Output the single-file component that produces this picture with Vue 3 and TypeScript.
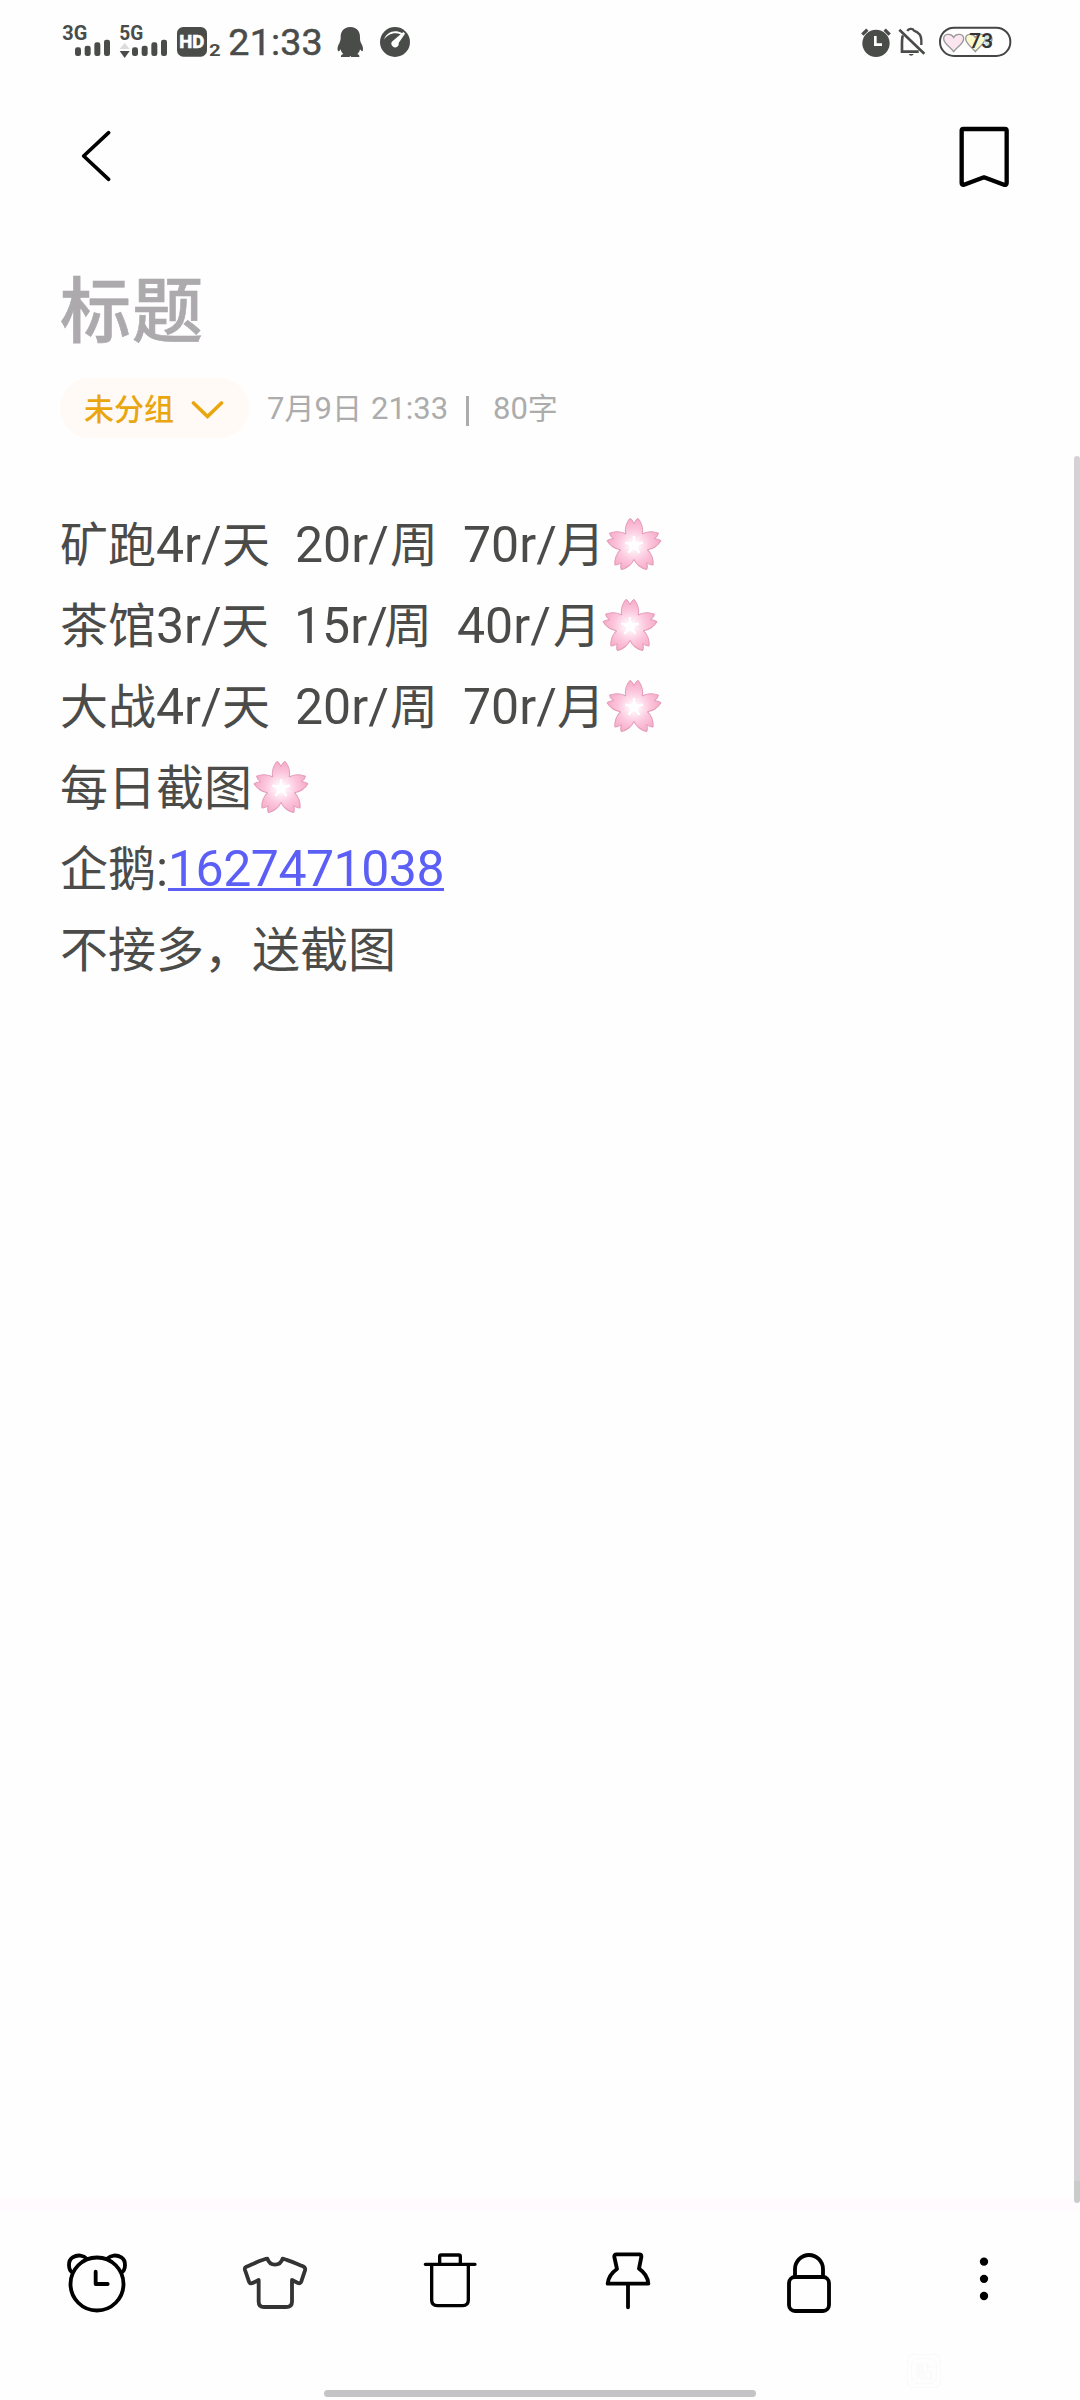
<script setup lang="ts">
interface Segment {
  text: string
  width: number
  kind: 'han' | 'latin' | 'link' | 'gap' | 'flower'
}

const han = (text: string): Segment => ({ text, width: text.length * 48, kind: 'han' })
const latin = (text: string, width: number): Segment => ({ text, width, kind: 'latin' })
const gap = (): Segment => ({ text: '\u00a0\u00a0', width: 25, kind: 'gap' })
const flower: Segment = { text: '', width: 58, kind: 'flower' }

const lines: Segment[][] = [
  [han('矿跑'), latin('4r/', 66), han('天'), gap(), latin('20r/', 95), han('周'), gap(), latin('70r/', 94), han('月'), flower],
  [han('茶馆'), latin('3r/', 65), han('天'), gap(), latin('15r/', 90), han('周'), gap(), latin('40r/', 96), han('月'), flower],
  [han('大战'), latin('4r/', 66), han('天'), gap(), latin('20r/', 95), han('周'), gap(), latin('70r/', 94), han('月'), flower],
  [han('每日截图'), flower],
  [han('企鹅'), latin(':', 12), { text: '1627471038', width: 276, kind: 'link' }],
  [han('不接多，送截图')],
]

const petals = [0, 72, 144, 216, 288]
</script>

<template>
  <div class="screen">
    <header class="status">
      <svg class="status-left" viewBox="0 0 1140 210">
        <g fill="#4a4c4a">
          <text x="37" y="89" font-size="62" font-weight="700" textLength="75" lengthAdjust="spacingAndGlyphs">3G</text>
          <rect x="75" y="112" width="18" height="26" rx="7" />
          <rect x="104" y="107" width="18" height="31" rx="7" />
          <rect x="133" y="97" width="18" height="41" rx="7" />
          <rect x="162" y="89" width="18" height="49" rx="7" />
          <text x="208" y="89" font-size="62" font-weight="700" textLength="72" lengthAdjust="spacingAndGlyphs">5G</text>
          <path d="M209 117L224 99L239 117Z" fill="#dcdcdc" />
          <path d="M209 123H239L224 144Z" />
          <rect x="246" y="112" width="18" height="26" rx="7" />
          <rect x="275" y="107" width="18" height="31" rx="7" />
          <rect x="304" y="97" width="18" height="41" rx="7" />
          <rect x="333" y="89" width="18" height="49" rx="7" />
          <rect x="381" y="51" width="90" height="89" rx="19" />
          <text x="388" y="115" font-size="56" font-weight="700" fill="#fff" stroke="#fff" stroke-width="2" textLength="75" lengthAdjust="spacingAndGlyphs">HD</text>
          <text x="477" y="137" font-size="50" font-weight="700" textLength="35" lengthAdjust="spacingAndGlyphs">2</text>
          <text x="535" y="136" font-size="113" font-weight="400" stroke="#4a4c4a" stroke-width="1.500" textLength="283" lengthAdjust="spacing">21:33</text>
          <path d="M901 51C880 51 871 66 872 84C872 91 870 94 868 100C863 108 861 117 864 123C867 125 870 121 872 118C873 124 876 129 880 132C874 134 872 137 873 141H898L901 138L904 141H928C929 137 927 134 922 132C926 129 929 124 930 118C933 122 936 125 938 123C941 117 938 107 933 99C931 94 930 91 930 84C931 66 922 51 901 51Z" />
          <circle cx="1035" cy="96" r="45" />
        </g>
        <path d="M1002 89C1009 65 1035 57 1056 69L1061 66L1065 71L1046 99A11 11 0 1 1 1029 92L1052 73C1033 65 1012 73 1002 89Z" fill="#fff" />
      </svg>
      <svg class="status-right" viewBox="0 0 600 210">
        <g fill="#4a4c4a">
          <circle cx="108" cy="100" r="41" />
          <path d="M67 74L82 59M134 59L149 74" stroke="#4a4c4a" stroke-width="10" />
          <path d="M106 78V104H126" fill="none" stroke="#fff" stroke-width="8" />
          <path d="M206 132H221A8 8 0 0 1 206 132Z" />
          <path d="M202 63C205 56 218 54 222 62C236 67 244 79 244 91V105" fill="none" stroke="#4a4c4a" stroke-width="7" />
          <path d="M189 77C185 82 186 91 186 121M182 125H236M178 59L253 131" fill="none" stroke="#4a4c4a" stroke-width="8" />
        </g>
        <g stroke="#9a989a" stroke-width="4">
          <path d="M341 125C333 113 311 101 311 86C311 70 334 69 341 82C348 69 371 70 371 86C371 101 349 113 341 125Z" fill="#fbe6f0" />
          <path d="M406 125C398 113 377 101 377 86C377 70 399 69 406 82C413 69 435 70 435 86C435 101 414 113 406 125Z" fill="#fbfacb" />
          <path d="M432 79C444 70 457 77 456 89C455 101 444 107 436 114" fill="#cdeaf0" />
        </g>
        <rect x="300" y="53" width="211" height="85" rx="42" fill="none" stroke="#444644" stroke-width="6" />
        <text x="388" y="114" font-size="61" font-weight="500" fill="#333" textLength="71" lengthAdjust="spacingAndGlyphs">73</text>
      </svg>
    </header>

    <nav class="topbar">
      <svg class="back" viewBox="90 75 100 190" aria-label="返回">
        <path d="M176 98L101 168L176 238" fill="none" stroke="#000" stroke-width="11" stroke-linecap="round" stroke-linejoin="round" />
      </svg>
      <svg class="bookmark" viewBox="117 75 150 190" aria-label="收藏">
        <path d="M130 87H255Q260 87 260 92V249Q260 256 252 254L192 232L132 254Q125 256 125 249V92Q125 87 130 87Z" fill="none" stroke="#000" stroke-width="13" stroke-linejoin="round" />
      </svg>
    </nav>

    <main class="note">
      <h1 class="title">标题</h1>
      <div class="meta">
        <div class="chip">
          <span class="chip-text">未分组</span>
          <svg class="chevron" viewBox="0 0 34 20">
            <path d="M3.500 3L17.500 16.500L31.500 3" fill="none" stroke="#e9a60f" stroke-width="3.600" stroke-linecap="round" />
          </svg>
        </div>
        <div class="info">
          <span class="date">7<i>月</i>9<i>日</i></span>
          <span class="time">21:33</span>
          <span class="bar"></span>
          <span class="count">80<i>字</i></span>
        </div>
      </div>
      <div class="body">
        <div v-for="(line, i) in lines" :key="i" class="line">
          <span v-for="(seg, j) in line" :key="j" :class="['seg', seg.kind]" :style="{ width: seg.width + 'px' }">
            <svg v-if="seg.kind === 'flower'" class="blossom" viewBox="-87 -85 174 174" aria-label="🌸">
              <defs>
                <radialGradient :id="'pink' + i" gradientUnits="userSpaceOnUse" cx="0" cy="0" r="80">
                  <stop offset="0" stop-color="#fff" />
                  <stop offset="0.2" stop-color="#fff0f7" />
                  <stop offset="0.6" stop-color="#fcc6dc" />
                  <stop offset="1" stop-color="#f6abc9" />
                </radialGradient>
              </defs>
              <g v-for="a in petals" :key="a" :transform="`rotate(${a})`">
                <path d="M0 0L-24.700 -34C-29 -50 -22 -70 -12 -81Q-5 -78 0 -65Q5 -78 12 -81C22 -70 29 -50 24.700 -34Z" :fill="`url(#pink${i})`" />
                <path d="M-24.700 -34C-29 -50 -22 -70 -12 -81Q-5 -78 0 -65Q5 -78 12 -81C22 -70 29 -50 24.700 -34" fill="none" stroke="#e29bb8" stroke-width="3" stroke-linejoin="round" />
              </g>
              <g v-for="a in petals" :key="'s' + a" :transform="`rotate(${a})`">
                <path d="M-6 -6L0 -24L6 -6Z" fill="#fff" stroke="#fff" stroke-width="3" />
                <circle cx="0" cy="-24" r="4" fill="#fff" />
              </g>
            </svg>
            <template v-else>{{ seg.text }}</template>
          </span>
        </div>
      </div>
    </main>

    <footer class="toolbar">
      <svg viewBox="36 150 270 270" class="stroke">
        <path d="M97 247C85 240 82 212 98 202C113 193 131 196 140 206M245 247C257 240 260 212 244 202C229 193 212 196 202 206" />
        <circle cx="171" cy="282" r="79.500" />
        <path d="M167 245V282H203" />
      </svg>
      <svg viewBox="567 150 270 270" class="stroke shirt">
        <path d="M682 206C671 206 640 222 619 230Q613 233 615 240L627 275Q630 282 638 279L656 270V335Q656 351 672 351H738Q756 351 756 335V270L774 279Q781 282 784 274L795 241Q797 233 789 229C771 222 742 209 728 206C724 218 717 224 705 224C693 224 686 218 682 206Z" />
      </svg>
      <svg viewBox="1098 150 270 270" class="stroke trash">
        <path d="M1156 223H1305M1199 221V200Q1199 195 1204 195H1256Q1261 195 1261 200V221M1175 224V330Q1175 347 1192 347H1268Q1285 347 1285 330V224" />
      </svg>
      <svg viewBox="69 150 270 270" class="stroke">
        <path d="M170 193H238Q245 193 244 201L237 236Q263 254 265 281H143Q146 254 171 237L163 201Q162 193 170 193ZM204 281V352" />
      </svg>
      <svg viewBox="600 150 270 270" class="stroke">
        <rect x="687" y="261" width="120" height="102" rx="18" />
        <path d="M705 260V238A42 43 0 0 1 789 238V260" />
      </svg>
      <svg viewBox="1131 150 270 270">
        <circle cx="1272" cy="215" r="12.500" />
        <circle cx="1272" cy="266.500" r="12.500" />
        <circle cx="1272" cy="318" r="12.500" />
      </svg>
    </footer>

    <div class="scrollbar"></div>
    <div class="watermark"><span>贴</span></div>
    <div class="home"></div>
  </div>
</template>

<style>
body {
  background: #fefefe;
}
</style>

<style scoped>
.screen {
  position: relative;
  display: flex;
  flex-direction: column;
  width: 1080px;
  height: 2400px;
  overflow: hidden;
  background: #fefefe;
  font-family: Roboto, "Noto Sans CJK SC", sans-serif;
}
svg {
  display: block;
}
.status {
  display: flex;
  justify-content: space-between;
  height: 70px;
  padding: 10px 40px 0 50px;
}
.status-left {
  width: 380px;
  height: 70px;
}
.status-right {
  width: 200px;
  height: 70px;
}
.topbar {
  display: flex;
  justify-content: space-between;
  height: 63px;
  padding: 45px 71px 0 80px;
}
.back {
  width: 33.330px;
  height: 63.330px;
}
.bookmark {
  width: 50px;
  height: 63.330px;
}
.note {
  flex: 1;
  padding: 0 60px;
}
.title {
  margin: 65px 0 0;
  height: 104px;
  line-height: 104px;
  font-size: 71px;
  font-weight: 500;
  letter-spacing: 1px;
  font-family: "Noto Sans CJK SC", sans-serif;
  color: #acaaad;
  -webkit-text-stroke: 0.600px #acaaad;
}
.meta {
  display: flex;
  align-items: center;
  margin-top: 21px;
  height: 60px;
  color: #acacac;
  font-size: 31px;
}
.info {
  display: flex;
  align-items: baseline;
  height: 60px;
  line-height: 62px;
}
.meta i {
  font-style: normal;
  font-size: 30px;
  line-height: 1;
}
.chip {
  display: flex;
  align-items: center;
  width: 189px;
  height: 60px;
  border-radius: 30px;
  background: #fffaf6;
  color: #e9a60f;
}
.chip-text {
  width: 106px;
  margin: -3px 0 0 24px;
  font-family: "Noto Sans CJK SC", sans-serif;
  font-size: 30px;
  font-weight: 500;
}
.chevron {
  width: 34px;
  height: 20px;
  margin-top: 4px;
}
.date,
.time,
.count {
  flex: none;
  white-space: nowrap;
}
.date {
  width: 104px;
  margin-left: 18px;
}
.time {
  width: 95px;
}
.bar {
  align-self: center;
  width: 3px;
  height: 30px;
  margin-top: 5px;
  background: #acacac;
}
.count {
  margin-left: 24px;
}
.body {
  margin-top: 64px;
}
.line {
  display: flex;
  align-items: baseline;
  height: 81px;
  line-height: 81px;
  color: #4b4c4a;
}
.seg {
  flex: none;
  white-space: nowrap;
}
.han {
  height: 81px;
  line-height: 78px;
  font-family: "Noto Sans CJK SC", sans-serif;
  font-size: 48px;
}
.latin,
.link,
.gap {
  font-size: 50px;
}
.link {
  color: #5c5ff5;
  text-decoration: underline;
  text-decoration-thickness: 2.500px;
  text-underline-offset: 2px;
  text-decoration-skip-ink: none;
  letter-spacing: -0.500px;
}
.flower {
  align-self: flex-start;
}
.blossom {
  width: 58px;
  height: 58px;
  margin-top: 15px;
}
.toolbar {
  display: flex;
  gap: 87px;
  flex: none;
  height: 202px;
  box-sizing: border-box;
  padding: 42px 0 0 52px;
  background: linear-gradient(#fffafe 0 13px, #fefefe 13px);
}
.toolbar svg {
  width: 90px;
  height: 90px;
}
.stroke {
  fill: none;
  stroke: #000;
  stroke-width: 11.500;
  stroke-linecap: round;
  stroke-linejoin: round;
}
.shirt {
  stroke: #333;
}
.trash {
  stroke-width: 10;
}
.scrollbar {
  position: absolute;
  top: 456px;
  right: 0;
  width: 6px;
  height: 1747px;
  border-radius: 3px;
  background: linear-gradient(#d5d2d5 0 1725px, #cacbcb 1725px);
}
.watermark {
  position: absolute;
  left: 907px;
  top: 2354px;
  display: flex;
  align-items: center;
  justify-content: center;
  width: 32px;
  height: 32px;
  border: 1px solid #fafafa;
  border-radius: 6px;
}
.watermark span {
  width: 24px;
  height: 24px;
  border: 1px solid #fafafa;
  border-radius: 8px;
  font: 18px/23px "Noto Sans CJK SC", sans-serif;
  text-align: center;
  color: #fafafa;
}
.home {
  position: absolute;
  left: 324px;
  top: 2390px;
  width: 432px;
  height: 7px;
  border-radius: 4px;
  background: #c4c3c5;
}
</style>
